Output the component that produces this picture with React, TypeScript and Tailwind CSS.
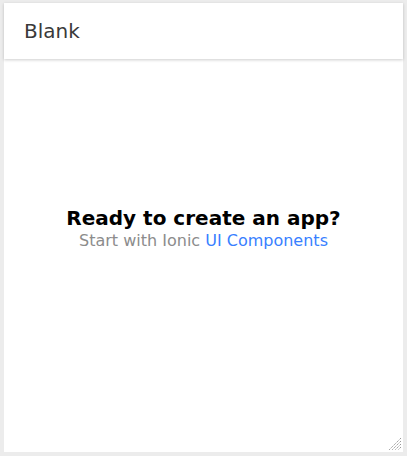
import React from "react";

const ResizeGrip: React.FC = () => (
  <svg width="14" height="14" viewBox="0 0 14 14" className="absolute bottom-[1px] right-[1px]">
    <path
      d="M13 1L1 13M13 4L4 13M13 7L7 13M13 10L10 13"
      stroke="#9a9a9a"
      strokeWidth="1"
      strokeDasharray="1.4 0.8"
    />
  </svg>
);

const App: React.FC = () => {
  return (
    <div className="w-[407px] h-[456px] bg-[#ececec] pt-[3px] pb-[4px] pl-[4px] pr-[4px] font-['DejaVu_Sans',sans-serif]">
      <div className="relative flex flex-col h-full bg-white">
        {/* Toolbar */}
        <div className="h-[56px] flex items-center px-5 shadow-[0_1px_3px_rgba(0,0,0,0.2)] z-10">
          <span className="text-[20px] text-[#3a3a3a]">Blank</span>
        </div>

        {/* Content */}
        <div className="flex-1 flex flex-col items-center justify-center pb-[53px]">
          <strong className="text-[20px] leading-[24px] text-black">Ready to create an app?</strong>
          <p className="text-[16px] leading-[22px] text-[#8c8c8c]">
            Start with Ionic <span className="text-[#3880ff]">UI Components</span>
          </p>
        </div>

        <ResizeGrip />
      </div>
    </div>
  );
};

export default App;
